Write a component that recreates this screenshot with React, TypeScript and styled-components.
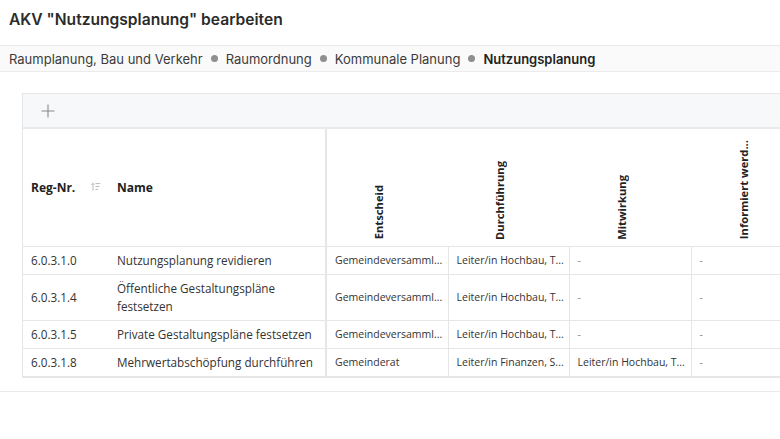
import styled, { createGlobalStyle } from 'styled-components';

const GlobalStyle = createGlobalStyle`
  html, body {
    margin: 0;
    padding: 0;
    background: #fff;
  }
  body {
    font-family: 'Open Sans', 'Liberation Sans', sans-serif;
    color: #333;
    overflow: hidden;
  }
`;

const Page = styled.div`
  width: 780px;
  overflow: hidden;
`;

const Title = styled.h1`
  margin: 0;
  height: 45px;
  box-sizing: border-box;
  padding: 10px 9px 0;
  font-family: Inter, 'Noto Sans', sans-serif;
  font-size: 15.6px;
  line-height: 20px;
  font-weight: 600;
  color: #2b2b2b;
`;

const Breadcrumb = styled.nav`
  height: 27px;
  box-sizing: border-box;
  display: flex;
  align-items: center;
  gap: 8px;
  padding: 0 9px;
  background: #fafafa;
  border-top: 1px solid #ebebeb;
  border-bottom: 1px solid #ebebeb;
  font-family: Inter, 'Noto Sans', sans-serif;
  font-size: 13px;
  color: #333;
  white-space: nowrap;
`;

const Crumb = styled.span<{ $current?: boolean }>`
  font-weight: ${(p) => (p.$current ? 600 : 400)};
  color: ${(p) => (p.$current ? '#222' : '#3a3a3a')};
`;

const Dot = styled.span`
  width: 7px;
  height: 7px;
  border-radius: 50%;
  background: #8f8f8f;
  flex: none;
`;

const Content = styled.div`
  padding: 21px 0 13px 22px;
  border-bottom: 1px solid #ebebeb;
  overflow: hidden;
`;

const Card = styled.div`
  width: 791px;
  border: 1px solid #e6e6e6;
  background: #fff;
`;

const Toolbar = styled.div`
  height: 33px;
  display: flex;
  align-items: center;
  padding-left: 17px;
  background: #f7f8fa;
  border-bottom: 2px solid #ebebeb;
`;

const AddButton = styled.button`
  border: none;
  background: none;
  padding: 0;
  width: 16px;
  height: 16px;
  display: flex;
  align-items: center;
  justify-content: center;
  cursor: pointer;
`;

const Table = styled.table`
  border-collapse: collapse;
  table-layout: fixed;
  width: 791px;
`;

const HeadRow = styled.tr`
  height: 117px;
`;

const HeadCell = styled.th<{ $divider?: boolean }>`
  padding: 0 8px;
  text-align: left;
  font-size: 12px;
  font-weight: 700;
  color: #222;
  border-bottom: 1px solid #e6e6e6;
  border-right: ${(p) => (p.$divider ? '2px solid #e6e6e6' : 'none')};
  white-space: nowrap;
`;

const HeadInner = styled.div`
  display: flex;
  align-items: center;
  gap: 16px;
`;

const RotatedCell = styled.th`
  padding: 0 18px 6px 0;
  vertical-align: bottom;
  border-bottom: 1px solid #e6e6e6;
`;

const Rotated = styled.div`
  margin: 0 auto;
  writing-mode: vertical-rl;
  transform: rotate(180deg);
  font-size: 11.2px;
  font-weight: 700;
  color: #222;
  white-space: nowrap;
  text-align: left;
`;

const Row = styled.tr<{ $tall?: boolean }>`
  height: ${(p) => (p.$tall ? 46 : 28)}px;
`;

const Cell = styled.td<{ $small?: boolean; $divider?: boolean; $sep?: boolean }>`
  padding: 0 6px 0 8px;
  font-size: ${(p) => (p.$small ? 10.5 : 11.7)}px;
  line-height: 18px;
  color: #333;
  border-bottom: 1px solid #e6e6e6;
  border-right: ${(p) => (p.$divider ? '2px solid #e6e6e6' : p.$sep ? '1px solid #e6e6e6' : 'none')};
  white-space: ${(p) => (p.$small ? 'nowrap' : 'normal')};
  overflow: hidden;
`;

const Muted = styled.span`
  color: #888;
`;

const PlusIcon = () => (
  <svg width="14" height="14" viewBox="0 0 14 14">
    <path d="M7 0.5v13M0.5 7h13" stroke="#8a8a8a" strokeWidth="1.1" fill="none" />
  </svg>
);

const SortIcon = () => (
  <svg width="10" height="10" viewBox="0 0 10 10">
    <path d="M2 9V1.2M0.4 2.8L2 1.2l1.6 1.6" stroke="#b0b0b0" strokeWidth="0.9" fill="none" />
    <path d="M4.6 1.5h5M4.6 4.5h4M4.6 7.5h2.6" stroke="#b0b0b0" strokeWidth="0.9" fill="none" />
  </svg>
);

const roles = ['Entscheid', 'Durchführung', 'Mitwirkung', 'Informiert werd...'];

const rows = [
  {
    nr: '6.0.3.1.0',
    name: 'Nutzungsplanung revidieren',
    cells: ['Gemeindeversamml...', 'Leiter/in Hochbau, T...', '-', '-'],
  },
  {
    nr: '6.0.3.1.4',
    name: 'Öffentliche Gestaltungspläne festsetzen',
    cells: ['Gemeindeversamml...', 'Leiter/in Hochbau, T...', '-', '-'],
    tall: true,
  },
  {
    nr: '6.0.3.1.5',
    name: 'Private Gestaltungspläne festsetzen',
    cells: ['Gemeindeversamml...', 'Leiter/in Hochbau, T...', '-', '-'],
  },
  {
    nr: '6.0.3.1.8',
    name: 'Mehrwertabschöpfung durchführen',
    cells: ['Gemeinderat', 'Leiter/in Finanzen, S...', 'Leiter/in Hochbau, T...', '-'],
  },
];

export default function App() {
  return (
    <Page>
      <GlobalStyle />
      <Title>AKV "Nutzungsplanung" bearbeiten</Title>
      <Breadcrumb>
        <Crumb>Raumplanung, Bau und Verkehr</Crumb>
        <Dot />
        <Crumb>Raumordnung</Crumb>
        <Dot />
        <Crumb>Kommunale Planung</Crumb>
        <Dot />
        <Crumb $current>Nutzungsplanung</Crumb>
      </Breadcrumb>
      <Content>
        <Card>
          <Toolbar>
            <AddButton aria-label="Hinzufügen">
              <PlusIcon />
            </AddButton>
          </Toolbar>
          <Table>
            <colgroup>
              <col style={{ width: 86 }} />
              <col style={{ width: 217 }} />
              <col style={{ width: 122 }} />
              <col style={{ width: 121 }} />
              <col style={{ width: 122 }} />
              <col style={{ width: 123 }} />
            </colgroup>
            <thead>
              <HeadRow>
                <HeadCell>
                  <HeadInner>
                    Reg-Nr.
                    <SortIcon />
                  </HeadInner>
                </HeadCell>
                <HeadCell $divider>Name</HeadCell>
                {roles.map((r) => (
                  <RotatedCell key={r}>
                    <Rotated>{r}</Rotated>
                  </RotatedCell>
                ))}
              </HeadRow>
            </thead>
            <tbody>
              {rows.map((row) => (
                <Row key={row.nr} $tall={row.tall}>
                  <Cell>{row.nr}</Cell>
                  <Cell $divider>{row.name}</Cell>
                  {row.cells.map((c, i) => (
                    <Cell key={i} $small $sep={i < 3}>
                      {c === '-' ? <Muted>-</Muted> : c}
                    </Cell>
                  ))}
                </Row>
              ))}
            </tbody>
          </Table>
        </Card>
      </Content>
    </Page>
  );
}
